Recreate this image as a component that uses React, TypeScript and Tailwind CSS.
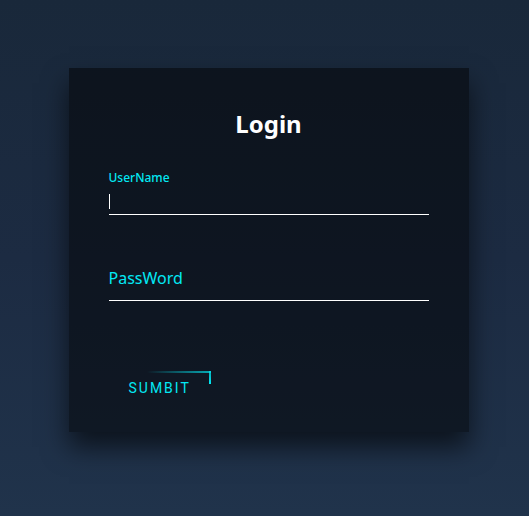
export default function App() {
  return (
    <main className="flex min-h-screen flex-col items-center bg-linear-to-b from-[#19283a] via-[#1c2b42] to-[#20334b] pt-[68px] pr-4 pb-[84px] pl-6 font-['Noto_Sans',sans-serif]">
      <form
        className="w-full max-w-[400px] bg-black/50 px-10 pt-10 pb-[27px] shadow-[0_15px_25px_rgba(0,0,0,0.6)]"
        onSubmit={(event) => event.preventDefault()}
      >
        <h1 className="text-center text-2xl leading-8 font-bold text-white">Login</h1>

        <div className="mt-7">
          <label htmlFor="username" className="block text-xs leading-5 font-medium text-[#03e9f4]">
            UserName
          </label>
          <div className="relative">
            <input
              id="username"
              type="text"
              autoComplete="off"
              className="block h-[27px] w-full border-b border-white bg-transparent text-base text-white caret-transparent outline-none"
            />
            <span aria-hidden="true" className="absolute top-1.5 left-0 h-[15px] w-px bg-white" />
          </div>
        </div>

        <div className="relative mt-10">
          <input
            id="password"
            type="password"
            className="block h-[46px] w-full border-b border-white bg-transparent text-base text-white outline-none"
          />
          <label htmlFor="password" className="absolute top-[11px] left-0 text-base leading-6 text-[#03e9f4]">
            PassWord
          </label>
        </div>

        <button
          type="submit"
          className="relative mt-[70px] block overflow-hidden px-5 py-2 font-['Roboto',Arial,sans-serif] text-sm leading-[18px] tracking-[2px] text-[#03e9f4] uppercase"
        >
          <span
            aria-hidden="true"
            className="absolute top-0 right-0 h-0.5 w-16 bg-linear-to-r from-transparent to-[#03e9f4]/70"
          />
          <span aria-hidden="true" className="absolute top-0 right-0 h-[13px] w-0.5 bg-linear-to-b from-[#03e9f4]/70 to-[#03e9f4]" />
          Sumbit
        </button>
      </form>
    </main>
  );
}
